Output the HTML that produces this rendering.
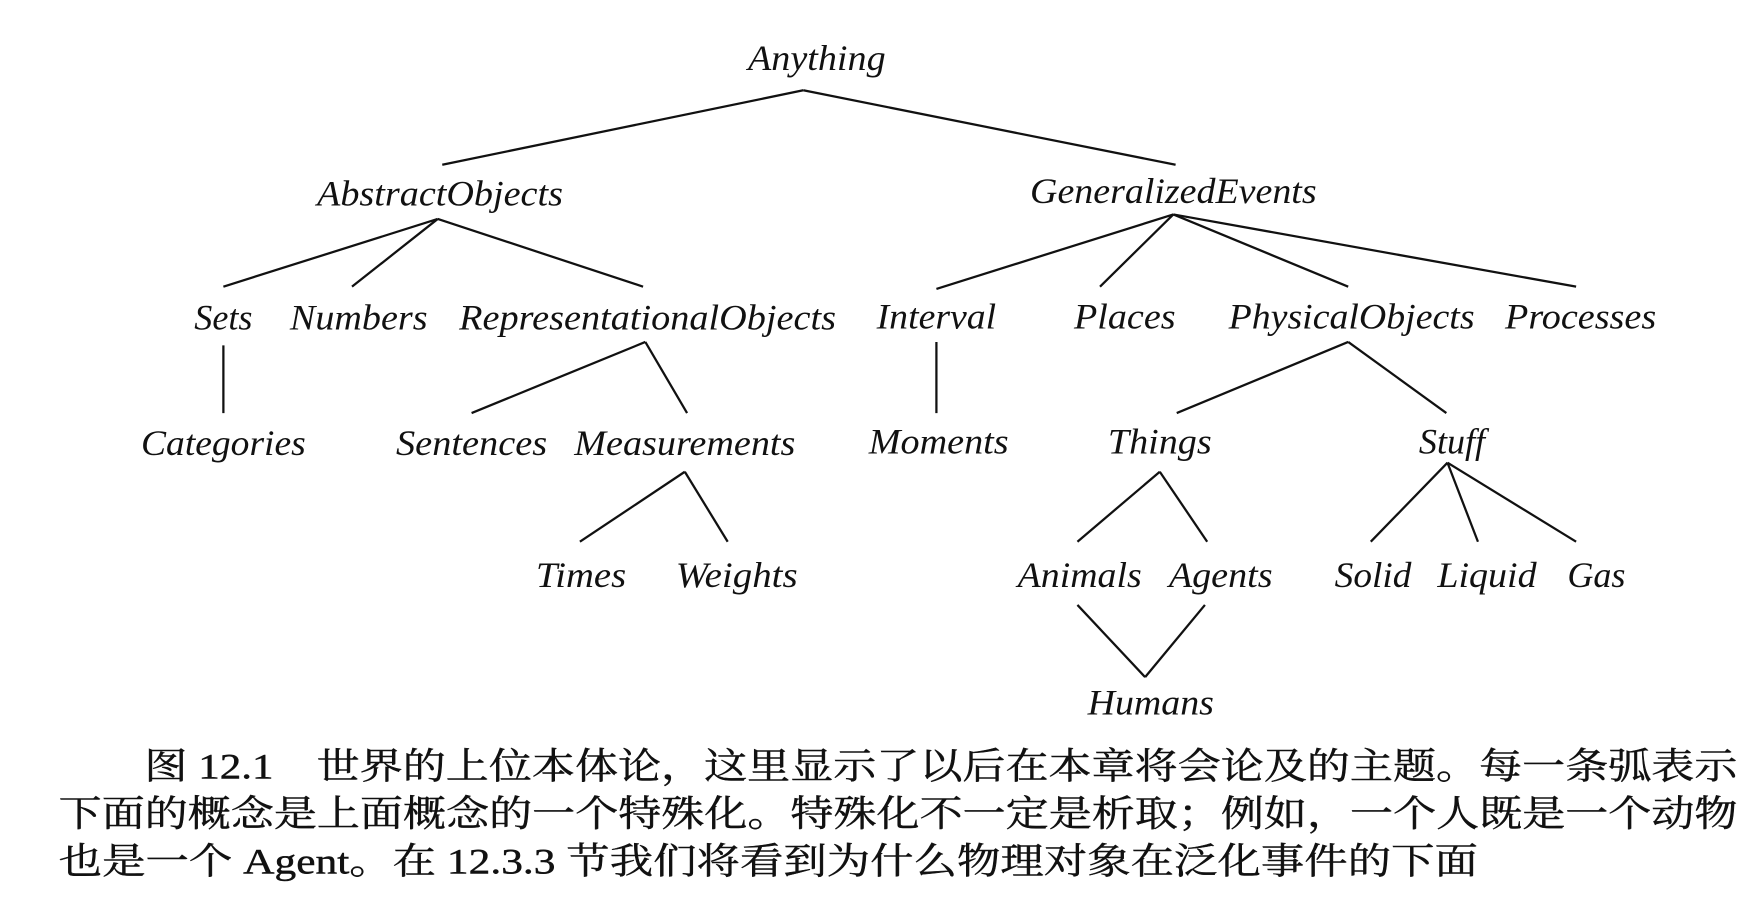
<!DOCTYPE html>
<html><head><meta charset="utf-8"><style>
html,body{margin:0;padding:0;background:#fff;width:1760px;height:904px;overflow:hidden}
svg{display:block}
.t{font-family:"Liberation Serif",serif;font-style:italic;font-size:32px;fill:#111;text-anchor:middle}
.c{font-family:"Liberation Serif","Noto Serif CJK SC",serif;font-size:32px;fill:#111;stroke:#111;stroke-width:0.4}
line{stroke:#111;stroke-width:2}
</style></head><body>
<svg width="1760" height="904" viewBox="0 0 1560 801" preserveAspectRatio="none">
<g>
<line x1="712" y1="80" x2="392" y2="146"/><line x1="712" y1="80" x2="1042" y2="146"/>
<line x1="388" y1="194" x2="198" y2="254"/><line x1="388" y1="194" x2="312" y2="254"/><line x1="388" y1="194" x2="570" y2="254"/>
<line x1="1040" y1="190" x2="830" y2="256"/><line x1="1040" y1="190" x2="975" y2="254"/><line x1="1040" y1="190" x2="1195" y2="254"/><line x1="1040" y1="190" x2="1397" y2="254"/>
<line x1="198" y1="306" x2="198" y2="366"/>
<line x1="572" y1="303" x2="418" y2="366"/><line x1="572" y1="303" x2="609" y2="366"/>
<line x1="830" y1="303" x2="830" y2="366"/>
<line x1="1195" y1="303" x2="1043" y2="366"/><line x1="1195" y1="303" x2="1282" y2="366"/>
<line x1="607" y1="418" x2="514" y2="480"/><line x1="607" y1="418" x2="645" y2="480"/>
<line x1="1028" y1="418" x2="955" y2="480"/><line x1="1028" y1="418" x2="1070" y2="480"/>
<line x1="1283" y1="410" x2="1215" y2="480"/><line x1="1283" y1="410" x2="1310" y2="480"/><line x1="1283" y1="410" x2="1397" y2="480"/>
<line x1="955" y1="536" x2="1015" y2="600"/><line x1="1068" y1="536" x2="1015" y2="600"/>
</g>
<g class="t">
<text x="724" y="62" textLength="122" lengthAdjust="spacingAndGlyphs">Anything</text>
<text x="390" y="182" textLength="218" lengthAdjust="spacingAndGlyphs">AbstractObjects</text>
<text x="1040" y="180" textLength="254" lengthAdjust="spacingAndGlyphs">GeneralizedEvents</text>
<text x="198" y="292">Sets</text><text x="318" y="292" textLength="122" lengthAdjust="spacingAndGlyphs">Numbers</text><text x="574" y="292" textLength="334" lengthAdjust="spacingAndGlyphs">RepresentationalObjects</text>
<text x="830" y="291" textLength="106" lengthAdjust="spacingAndGlyphs">Interval</text><text x="997" y="291" textLength="90" lengthAdjust="spacingAndGlyphs">Places</text><text x="1198" y="291" textLength="218" lengthAdjust="spacingAndGlyphs">PhysicalObjects</text><text x="1401" y="291" textLength="134" lengthAdjust="spacingAndGlyphs">Processes</text>
<text x="198" y="403" textLength="146" lengthAdjust="spacingAndGlyphs">Categories</text><text x="418" y="403" textLength="134" lengthAdjust="spacingAndGlyphs">Sentences</text><text x="607" y="403" textLength="196" lengthAdjust="spacingAndGlyphs">Measurements</text>
<text x="832" y="402" textLength="124" lengthAdjust="spacingAndGlyphs">Moments</text><text x="1028" y="402" textLength="92" lengthAdjust="spacingAndGlyphs">Things</text><text x="1287" y="402">Stuff</text>
<text x="515" y="520" textLength="80" lengthAdjust="spacingAndGlyphs">Times</text><text x="653" y="520" textLength="108" lengthAdjust="spacingAndGlyphs">Weights</text><text x="957" y="520" textLength="110" lengthAdjust="spacingAndGlyphs">Animals</text><text x="1082" y="520" textLength="92" lengthAdjust="spacingAndGlyphs">Agents</text>
<text x="1217" y="520" textLength="68" lengthAdjust="spacingAndGlyphs">Solid</text><text x="1318" y="520" textLength="88" lengthAdjust="spacingAndGlyphs">Liquid</text><text x="1415" y="520">Gas</text>
<text x="1020" y="633" textLength="112" lengthAdjust="spacingAndGlyphs">Humans</text>
</g>
<text class="c" x="128" y="690" textLength="1412" lengthAdjust="spacingAndGlyphs">图 12.1　世界的上位本体论，这里显示了以后在本章将会论及的主题。每一条弧表示</text>
<text class="c" x="52" y="732" textLength="1488" lengthAdjust="spacingAndGlyphs">下面的概念是上面概念的一个特殊化。特殊化不一定是析取；例如，一个人既是一个动物</text>
<text class="c" x="52" y="774" textLength="1258" lengthAdjust="spacingAndGlyphs">也是一个 Agent。在 12.3.3 节我们将看到为什么物理对象在泛化事件的下面</text>
</svg>
</body></html>
